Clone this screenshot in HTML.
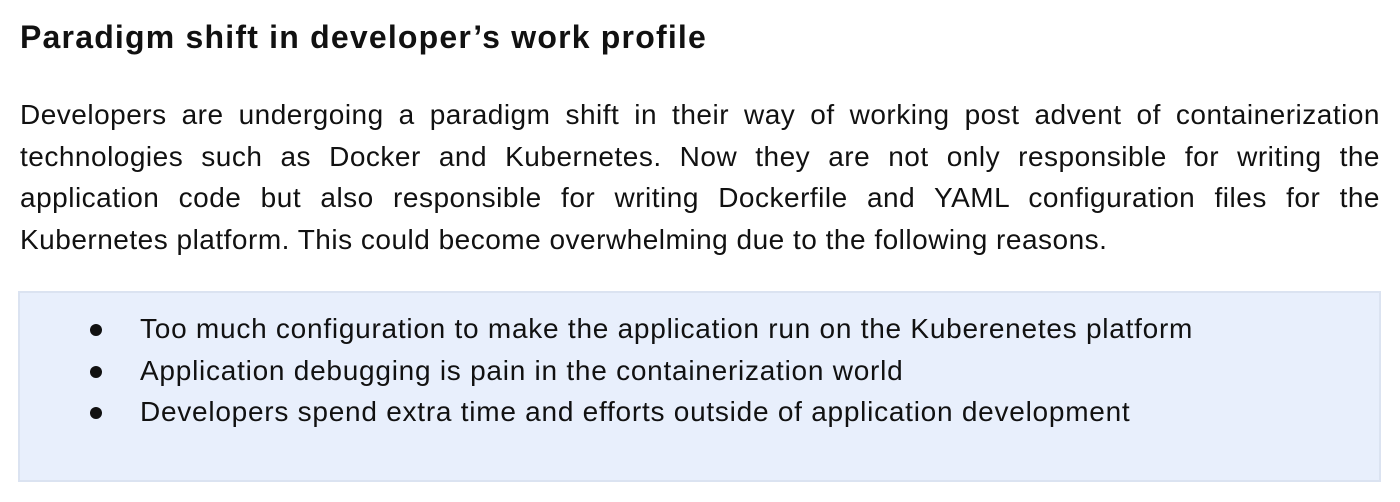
<!DOCTYPE html>
<html><head><style>
body{margin:0;width:1400px;height:502px;background:#fff;font-family:"Liberation Sans",Arial,sans-serif;color:#111;overflow:hidden;position:relative}
h1{position:absolute;left:20px;top:17px;margin:0;font-size:32px;font-weight:bold;line-height:40px;letter-spacing:1.2px;white-space:nowrap}
.p{position:absolute;left:20px;width:1360px;font-size:28px;line-height:40px;text-align:justify;text-align-last:justify;white-space:nowrap;letter-spacing:0.5px}
.last{text-align-last:left}
.box{position:absolute;left:18px;top:291px;width:1359px;height:187px;background:#e8effc;border:2px solid #dbe3f1}
.li{position:absolute;left:120px;font-size:28px;line-height:40px;letter-spacing:0.75px}
.dot{position:absolute;left:70px;width:12px;height:12px;border-radius:50%;background:#111}
.li span{position:absolute;left:0;white-space:nowrap}
</style></head><body>
<h1>Paradigm shift in developer’s work profile</h1>
<div class="p" style="top:95px">Developers are undergoing a paradigm shift in their way of working post advent of containerization</div>
<div class="p" style="top:137px">technologies such as Docker and Kubernetes. Now they are not only responsible for writing the</div>
<div class="p" style="top:178px">application code but also responsible for writing Dockerfile and YAML configuration files for the</div>
<div class="p last" style="top:220px">Kubernetes platform. This could become overwhelming due to the following reasons.</div>
<div class="box">
<div class="dot" style="top:31px"></div><div class="li" style="top:16px"><span>Too much configuration to make the application run on the Kuberenetes platform</span></div>
<div class="dot" style="top:73px"></div><div class="li" style="top:58px"><span>Application debugging is pain in the containerization world</span></div>
<div class="dot" style="top:114px"></div><div class="li" style="top:99px"><span>Developers spend extra time and efforts outside of application development</span></div>
</div>
</body></html>
